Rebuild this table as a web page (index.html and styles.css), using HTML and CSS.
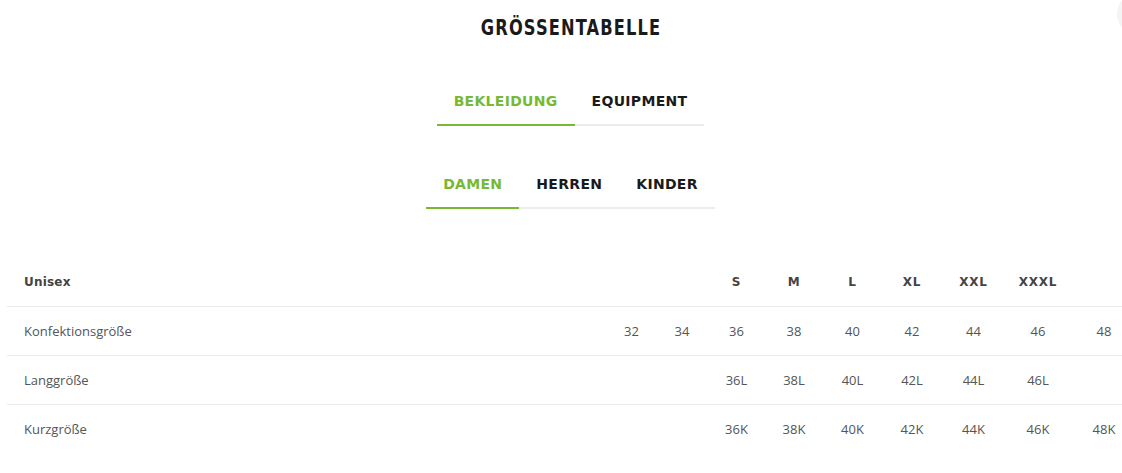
FILE: index.html
```html
<!DOCTYPE html>
<html lang="de">
<head>
<meta charset="utf-8">
<title>Größentabelle</title>
<link rel="stylesheet" href="styles.css">
</head>
<body>
<div class="corner-blob"></div>
<main class="page">
  <header class="head">
    <h1 class="title">GRÖSSENTABELLE</h1>
    <nav class="tabs tabs-main">
      <span class="tab tab-active">BEKLEIDUNG</span>
      <span class="tab">EQUIPMENT</span>
    </nav>
    <nav class="tabs tabs-sub">
      <span class="tab tab-active">DAMEN</span>
      <span class="tab">HERREN</span>
      <span class="tab">KINDER</span>
    </nav>
  </header>
  <div class="table-wrap">
    <div class="size-table">
      <div class="row row-head">
        <div class="cell cell-label">Unisex</div>
        <div class="cell"></div>
        <div class="cell"></div>
        <div class="cell">S</div>
        <div class="cell">M</div>
        <div class="cell">L</div>
        <div class="cell">XL</div>
        <div class="cell">XXL</div>
        <div class="cell">XXXL</div>
        <div class="cell"></div>
      </div>
      <div class="row">
        <div class="cell cell-label">Konfektionsgröße</div>
        <div class="cell">32</div>
        <div class="cell">34</div>
        <div class="cell">36</div>
        <div class="cell">38</div>
        <div class="cell">40</div>
        <div class="cell">42</div>
        <div class="cell">44</div>
        <div class="cell">46</div>
        <div class="cell">48</div>
      </div>
      <div class="row">
        <div class="cell cell-label">Langgröße</div>
        <div class="cell"></div>
        <div class="cell"></div>
        <div class="cell">36L</div>
        <div class="cell">38L</div>
        <div class="cell">40L</div>
        <div class="cell">42L</div>
        <div class="cell">44L</div>
        <div class="cell">46L</div>
        <div class="cell"></div>
      </div>
      <div class="row row-last">
        <div class="cell cell-label">Kurzgröße</div>
        <div class="cell"></div>
        <div class="cell"></div>
        <div class="cell">36K</div>
        <div class="cell">38K</div>
        <div class="cell">40K</div>
        <div class="cell">42K</div>
        <div class="cell">44K</div>
        <div class="cell">46K</div>
        <div class="cell">48K</div>
      </div>
    </div>
  </div>
</main>
</body>
</html>
```
FILE: styles.css
```css
html, body {
  margin: 0;
  padding: 0;
  background: #fff;
  overflow: hidden;
}

body {
  font-family: "Open Sans", "DejaVu Sans", sans-serif;
  color: #555;
}

.corner-blob {
  position: absolute;
  top: -6px;
  left: 1117px;
  width: 40px;
  height: 40px;
  border-radius: 50%;
  background: #f4f4f4;
}

.page {
  display: flex;
  flex-direction: column;
  padding-top: 15px;
}

.head {
  display: flex;
  flex-direction: column;
  align-items: center;
  padding-left: 19px;
}

.title {
  margin: 0;
  font-family: "DejaVu Sans", sans-serif;
  font-stretch: condensed;
  font-weight: bold;
  font-size: 22px;
  line-height: 26px;
  letter-spacing: 1.4px;
  color: #1a1a1a;
  transform: scaleX(0.82);
}

.tabs {
  display: flex;
}

.tabs-main {
  margin-top: 43px;
}

.tabs-sub {
  margin-top: 41px;
}

.tab {
  font-family: "DejaVu Sans", sans-serif;
  font-weight: bold;
  font-size: 14px;
  line-height: 18px;
  letter-spacing: 0.3px;
  color: #1a1a1a;
  padding: 8px 17px 14px;
  border-bottom: 2px solid #ececec;
}

.tab-active {
  color: #77b932;
  border-bottom-color: #77b932;
}

.table-wrap {
  margin-top: 49px;
  margin-left: 7px;
  overflow: hidden;
}

.size-table {
  width: 1130px;
}

.row {
  display: grid;
  grid-template-columns: 1fr 49px 52px 57px 58px 59px 60px 63px 66px 66px;
  border-bottom: 1px solid #ebebeb;
}

.row-last {
  border-bottom: none;
}

.cell {
  padding: 16px 0;
  font-size: 13px;
  line-height: 16px;
  text-align: center;
  color: #555;
}

.cell-label {
  text-align: left;
  padding-left: 17px;
}

.row-head .cell {
  font-family: "DejaVu Sans", sans-serif;
  font-weight: bold;
  font-size: 12px;
  letter-spacing: 0.8px;
  color: #444;
}

.row-head .cell-label {
  letter-spacing: 0.2px;
}
```
